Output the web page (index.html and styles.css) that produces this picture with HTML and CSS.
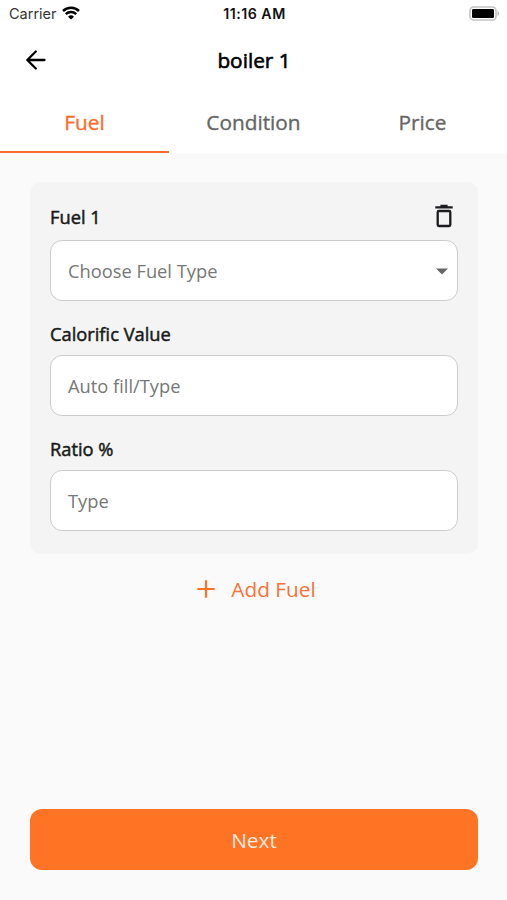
FILE: index.html
```html
<!DOCTYPE html>
<html lang="en">
<head>
<meta charset="utf-8">
<title>boiler 1</title>
<link rel="stylesheet" href="styles.css">
</head>
<body>
<header class="top">
  <div class="status">
    <div class="carrier"><span>Carrier</span>
      <svg width="18" height="14" viewBox="0 0 18 14"><g fill="none" stroke="#000" stroke-width="2.5"><path d="M1 5a11.5 11.5 0 0 1 16 0"/><path d="M3.8 8.2a7.4 7.4 0 0 1 10.4 0"/></g><path d="M6 10.7a4.3 4.3 0 0 1 6 0L9 13.6z"/></svg>
    </div>
    <span class="clock">11:16 AM</span>
    <svg class="battery" width="31" height="15" viewBox="0 0 31 15"><rect x="1" y="1" width="26" height="13" rx="3.5" fill="#fff" stroke="#c4c4c4" stroke-width="1.6"/><rect x="3" y="3" width="22" height="9" rx="1.2"/><path d="M28.5 5v5c2.2-.8 2.2-4.2 0-5" fill="#b8b8b8"/></svg>
  </div>
  <div class="bar">
    <svg class="back" width="20" height="20" viewBox="0 0 20 20" fill="none" stroke="#000" stroke-width="2.3" stroke-linecap="round" stroke-linejoin="round"><path d="M18.5 10H1.8M9.8 1.5 1.3 10l8.5 8.5"/></svg>
    <h1>boiler 1</h1>
  </div>
  <nav class="tabs"><span class="tab active">Fuel</span><span class="tab">Condition</span><span class="tab">Price</span></nav>
</header>
<main>
  <section class="card">
    <div class="head"><h2>Fuel 1</h2>
      <svg class="trash" width="20" height="24" viewBox="0 0 20 24" fill="none" stroke="#1c1b1f" stroke-width="2.3"><path d="M1.3 3.4h17.4M6.4 1.8h7.2"/><rect x="3.7" y="7" width="12.6" height="15" rx="1.2"/></svg>
    </div>
    <div class="field"><span>Choose Fuel Type</span><svg class="caret" width="12" height="7" viewBox="0 0 12 7"><path d="M0 .5h12l-6 6z" fill="#666"/></svg></div>
    <h2>Calorific Value</h2>
    <div class="field"><span>Auto fill/Type</span></div>
    <h2>Ratio %</h2>
    <div class="field"><span>Type</span></div>
  </section>
  <div class="add"><svg width="18" height="18" viewBox="0 0 18 18"><path d="M9 .3v17.4M.3 9h17.4" stroke="#ff7424" stroke-width="2.2"/></svg><span>Add Fuel</span></div>
  <button class="next">Next</button>
</main>
</body>
</html>
```
FILE: styles.css
```css
* { box-sizing: border-box; }
body { margin: 0; height: 900px; display: flex; flex-direction: column; background: #fafafa; color: #1a1a1a; font-family: "Open Sans", sans-serif; }
svg { display: block; flex: none; }
h1, h2 { margin: 0; }
.top { height: 153px; background: #fff; display: flex; flex-direction: column; }
.status { height: 27px; display: grid; grid-template-columns: 1fr auto 1fr; align-items: center; padding: 0 7px 0 9px; font: 14.5px/27px Inter, sans-serif; color: #111; }
.carrier { display: flex; align-items: center; gap: 5px; }
.carrier span { color: #333; }
.carrier svg { margin-top: -2px; }
.clock { font-weight: 600; font-size: 14.2px; letter-spacing: .5px; }
.battery { justify-self: end; margin-top: -1px; }
.bar { height: 66px; display: grid; grid-template-columns: 1fr auto 1fr; align-items: center; padding: 0 25px 0 26px; }
h1 { font-size: 20.8px; line-height: 28px; font-weight: 400; color: #000; -webkit-text-stroke: .6px; }
.tabs { flex: 1; display: grid; grid-template-columns: repeat(3, 1fr); }
.tab { display: flex; align-items: center; justify-content: center; font-size: 20.8px; color: #666; border-bottom: 2.5px solid transparent; -webkit-text-stroke: .35px; }
.tab.active { color: #fb6d2e; border-color: #fb6d2e; }
main { flex: 1; padding: 29px 29px 30px 30px; display: flex; flex-direction: column; }
.card { height: 372px; background: #f4f4f4; border-radius: 10px; padding: 20px; }
.head { height: 38px; display: flex; justify-content: space-between; }
.trash { margin: 2px 4.5px 0 0; }
h2 { font-size: 18.3px; line-height: 29px; font-weight: 400; -webkit-text-stroke: .5px; }
.field { height: 61px; background: #fff; border: 1px solid #ccc; border-radius: 12px; padding: 0 9px 0 17px; display: flex; align-items: center; justify-content: space-between; font-size: 18.3px; color: #777; }
.field + h2 { height: 54px; padding-top: 18px; }
.caret { margin-top: 1px; }
.add { height: 70px; display: flex; align-items: center; justify-content: center; gap: 16px; padding-left: 5px; color: #f97338; font-size: 20.8px; }
.next { margin-top: auto; height: 61px; border: 0; border-radius: 12px; background: #ff7424; color: #ffeadd; font: 20.8px "Open Sans", sans-serif; }
```
